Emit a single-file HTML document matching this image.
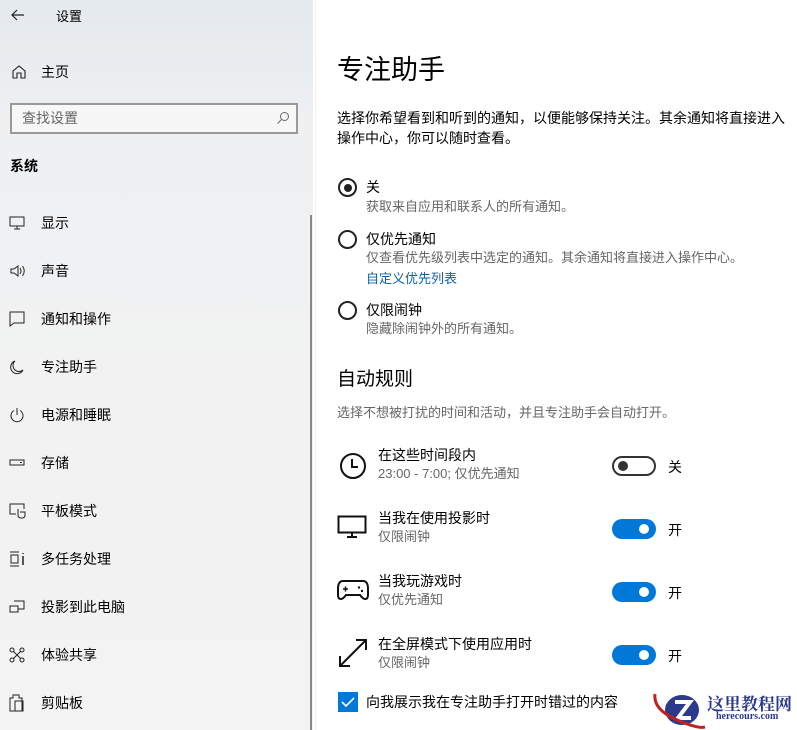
<!DOCTYPE html><html><head><meta charset="utf-8"><style>
*{margin:0;padding:0;box-sizing:border-box}
body{width:797px;height:730px;overflow:hidden;font-family:"Liberation Sans","Noto Sans CJK SC",sans-serif;background:#fff;position:relative;color:#000}
.l{position:absolute;left:0;top:0;width:313px;height:730px;background:linear-gradient(#e4e9ed 0,#eef0f2 120px,#f2f2f2 400px,#f3f3f3)}
.a{position:absolute;white-space:nowrap}
.n{position:absolute;left:41px;font-size:14px;line-height:20px}
.ic{position:absolute;left:9px}
.s{font-size:14px;line-height:20px}
.g{color:#666;font-size:13px;line-height:18px}
.rad{position:absolute;left:338px;width:19px;height:19px;border:2px solid #222;border-radius:50%}
.tg{position:absolute;left:612px;width:44px;height:20px;border-radius:10px;background:#0078d7}
.tg:after{content:"";position:absolute;right:7px;top:5px;width:10px;height:10px;border-radius:50%;background:#fff}
.tg.off{background:#fff;border:2px solid #333}
.tg.off:after{left:4px;top:3px;background:#333}
</style></head><body>
<div class="l"></div>
<div class="a" style="left:315px;top:0;width:1px;height:730px;background:#f0f0f0"></div>
<div class="a" style="left:310px;top:215px;width:2px;height:515px;background:#888"></div>
<svg class="a" style="left:10px;top:8px" width="16" height="14"><path d="M14 7H2M7 2L2 7l5 5" fill="none" stroke="#222" stroke-width="1.2"/></svg>
<div class="a" style="left:56px;top:6px;font-size:13px">设置</div>
<svg class="a" style="left:11px;top:64px" width="16" height="16"><path d="M2 14V7L8 2l6 5v7h-4V9H6v5z" fill="none" stroke="#222" stroke-width="1.1"/></svg>
<div class="n" style="top:62px">主页</div>
<div class="a" style="left:10px;top:103px;width:288px;height:31px;border:2px solid #999;background:#f7f7f7"></div>
<div class="a" style="left:22px;top:108px;font-size:14px;color:#666">查找设置</div>
<svg class="a" style="left:276px;top:111px" width="14" height="14"><circle cx="8.5" cy="5.5" r="4" fill="none" stroke="#666"/><path d="M5.5 8.5L1.5 12.5" stroke="#666"/></svg>
<div class="a" style="left:10px;top:156px;font-size:14px;font-weight:bold">系统</div>
<svg class="ic" style="top:216px" width="16" height="14"><rect x="1" y="1" width="14" height="9" fill="none" stroke="#222"/><path d="M8 10v3M5 13h6" stroke="#222"/></svg><div class="n" style="top:213px">显示</div>
<svg class="ic" style="top:264px" width="18" height="14"><path d="M2 5h3l4-3v10l-4-3H2z M11 4q2 3 0 6M13.5 2q3.5 5 0 10" fill="none" stroke="#222"/></svg><div class="n" style="top:261px">声音</div>
<svg class="ic" style="top:311px" width="16" height="16"><path d="M1 1h14v11H5l-4 3z" fill="none" stroke="#222"/></svg><div class="n" style="top:309px">通知和操作</div>
<svg class="ic" style="top:359px" width="16" height="16"><path d="M6 2a6.5 6.5 0 1 0 8 9A6 6 0 0 1 6 2z" fill="none" stroke="#222"/></svg><div class="n" style="top:357px">专注助手</div>
<svg class="ic" style="top:407px" width="16" height="16"><path d="M5 3.5a6 6 0 1 0 6 0M8 1v7" fill="none" stroke="#222"/></svg><div class="n" style="top:405px">电源和睡眠</div>
<svg class="ic" style="top:458px" width="16" height="10"><rect x="1" y="2" width="14" height="5" fill="none" stroke="#222"/><path d="M11 4.5h2" stroke="#222"/></svg><div class="n" style="top:453px">存储</div>
<svg class="ic" style="top:503px" width="18" height="16"><path d="M7 11H1V1h14v5" fill="none" stroke="#222"/><path d="M9 6v6q0 3 3 3h1q3 0 3-3v-3h-5" fill="none" stroke="#222"/></svg><div class="n" style="top:501px">平板模式</div>
<svg class="ic" style="top:551px" width="18" height="16"><path d="M1 1h9M1 15h9M2 4v8h7V4z" fill="none" stroke="#222"/><path d="M14 2v1M14 5v9" stroke="#222" stroke-width="1.5"/></svg><div class="n" style="top:549px">多任务处理</div>
<svg class="ic" style="top:600px" width="16" height="14"><path d="M5 1h10v8H9M1 6h8v6H1z" fill="none" stroke="#222"/></svg><div class="n" style="top:597px">投影到此电脑</div>
<svg class="ic" style="top:647px" width="16" height="16"><circle cx="3" cy="3" r="2" fill="none" stroke="#222"/><circle cx="13" cy="3" r="2" fill="none" stroke="#222"/><circle cx="3" cy="13" r="2" fill="none" stroke="#222"/><circle cx="13" cy="13" r="2" fill="none" stroke="#222"/><path d="M4.5 4.5l7 7M11.5 4.5l-7 7" stroke="#222"/></svg><div class="n" style="top:645px">体验共享</div>
<svg class="ic" style="top:694px" width="16" height="18"><path d="M1 4h3V1h6v3h3v13H1z M6 7h8v10H6z" fill="none" stroke="#222"/></svg><div class="n" style="top:693px">剪贴板</div>

<div class="a" style="left:337px;top:52px;font-size:27px;line-height:36px">专注助手</div>
<div class="a s" style="left:337px;top:108px">选择你希望看到和听到的通知，以便能够保持关注。其余通知将直接进入</div>
<div class="a s" style="left:337px;top:128px">操作中心，你可以随时查看。</div>
<div class="rad" style="top:178px"><div style="position:absolute;left:3.5px;top:3.5px;width:8px;height:8px;border-radius:50%;background:#222"></div></div>
<div class="a s" style="left:366px;top:177px">关</div>
<div class="a g" style="left:366px;top:198px">获取来自应用和联系人的所有通知。</div>
<div class="rad" style="top:230px"></div>
<div class="a s" style="left:366px;top:229px">仅优先通知</div>
<div class="a g" style="left:366px;top:249px">仅查看优先级列表中选定的通知。其余通知将直接进入操作中心。</div>
<div class="a" style="left:366px;top:268px;font-size:13px;color:#0066b4">自定义优先列表</div>
<div class="rad" style="top:301px"></div>
<div class="a s" style="left:366px;top:300px">仅限闹钟</div>
<div class="a g" style="left:366px;top:320px">隐藏除闹钟外的所有通知。</div>
<div class="a" style="left:337px;top:367px;font-size:19px;line-height:26px">自动规则</div>
<div class="a g" style="left:337px;top:404px">选择不想被打扰的时间和活动，并且专注助手会自动打开。</div>

<svg class="a" style="left:339px;top:452px" width="28" height="28"><circle cx="14" cy="14" r="12" fill="none" stroke="#111" stroke-width="2"/><path d="M13 7v8h6" fill="none" stroke="#111" stroke-width="2"/></svg>
<div class="a s" style="left:378px;top:445px">在这些时间段内</div>
<div class="a g" style="left:378px;top:465px">23:00 - 7:00; 仅优先通知</div>
<div class="tg off" style="top:456px"></div><div class="a s" style="left:668px;top:457px">关</div>

<svg class="a" style="left:337px;top:515px" width="30" height="24"><rect x="1.5" y="1.5" width="27" height="16" fill="none" stroke="#111" stroke-width="2"/><path d="M15 18v3M10 22h10" stroke="#111" stroke-width="2"/></svg>
<div class="a s" style="left:378px;top:508px">当我在使用投影时</div>
<div class="a g" style="left:378px;top:528px">仅限闹钟</div>
<div class="tg" style="top:519px"></div><div class="a s" style="left:668px;top:520px">开</div>

<svg class="a" style="left:337px;top:579px" width="32" height="22"><path d="M6 2h20q5 0 5 8v6q0 4-3 4-2 0-5-4H9q-3 4-5 4-3 0-3-4v-6q0-8 5-8z" fill="none" stroke="#111" stroke-width="2"/><path d="M6 10h5M8.5 7.5v5" stroke="#111" stroke-width="1.5"/><circle cx="22" cy="8.5" r="1.2" fill="#111"/><circle cx="25" cy="12" r="1.2" fill="#111"/></svg>
<div class="a s" style="left:378px;top:571px">当我玩游戏时</div>
<div class="a g" style="left:378px;top:591px">仅优先通知</div>
<div class="tg" style="top:582px"></div><div class="a s" style="left:668px;top:583px">开</div>

<svg class="a" style="left:338px;top:638px" width="30" height="30"><path d="M2 28L28 2M18 2h10v10M2 18v10h10" fill="none" stroke="#111" stroke-width="2"/></svg>
<div class="a s" style="left:378px;top:634px">在全屏模式下使用应用时</div>
<div class="a g" style="left:378px;top:654px">仅限闹钟</div>
<div class="tg" style="top:645px"></div><div class="a s" style="left:668px;top:646px">开</div>

<div class="a" style="left:338px;top:692px;width:20px;height:20px;background:#0078d7"><svg width="20" height="20"><path d="M4 10l4 4 8-8" fill="none" stroke="#fff" stroke-width="1.6"/></svg></div>
<div class="a s" style="left:366px;top:692px">向我展示我在专注助手打开时错过的内容</div>

<svg class="a" style="left:650px;top:688px" width="60" height="42"><ellipse cx="32" cy="22" rx="17" ry="15" fill="#2c3a8c"/><path d="M25 14h15l-12 16h13" fill="none" stroke="#fff" stroke-width="4"/><path d="M5 6q-2 15 20 25t30 8" fill="none" stroke="#c02020" stroke-width="3"/></svg>
<div class="a" style="left:707px;top:690px;font-size:17px;font-weight:bold;color:#2c3a8c;font-family:'Noto Serif CJK SC',serif">这里教程网</div>
<div class="a" style="left:716px;top:711px;font-size:10px;font-weight:bold;color:#2c3a8c;font-family:'Liberation Serif',serif">herecours.com</div>
</body></html>
